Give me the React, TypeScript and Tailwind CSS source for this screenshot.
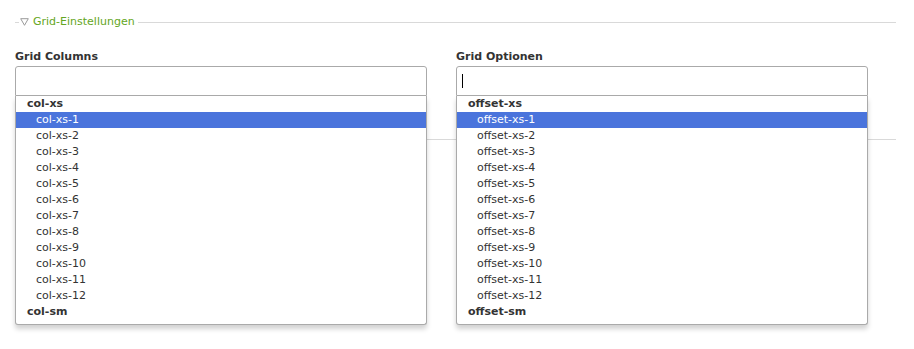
import React from 'react';

interface GridSelectProps {
  label: string;
  prefix: string;
  nextGroup: string;
  focused?: boolean;
}

const sizes = Array.from({ length: 12 }, (_, i) => i + 1);

const GridSelect: React.FC<GridSelectProps> = ({ label, prefix, nextGroup, focused = false }) => {
  return (
    <div className="flex flex-col">
      <label className="text-[11px] font-bold text-[#333] leading-[14px] h-[14px] mb-[2px]">{label}</label>
      <div className="relative">
        <div className="h-[30px] border border-[#aaa] rounded-t-[3px] bg-white flex items-center pl-[5px]">
          {focused && <span className="w-px h-[14px] bg-black" />}
        </div>
        {/* dropdown list lies over the content below */}
        <div className="absolute left-0 right-0 top-[30px] h-[229px] overflow-hidden bg-white border-x border-b border-[#aaa] rounded-b-[3px] shadow-[0_4px_5px_rgba(0,0,0,0.18)] z-10">
          <div className="h-[16px] leading-[16px] pl-[11px] text-[11px] font-bold text-[#333]">{prefix}</div>
          {sizes.map((n) => (
            <div
              key={n}
              className={
                n === 1
                  ? 'h-[16px] leading-[16px] pl-[20px] text-[11px] bg-[#4a74dc] text-white'
                  : 'h-[16px] leading-[16px] pl-[20px] text-[11px] text-[#333]'
              }
            >
              {prefix}-{n}
            </div>
          ))}
          <div className="h-[16px] leading-[16px] pl-[11px] text-[11px] font-bold text-[#333]">{nextGroup}</div>
        </div>
      </div>
    </div>
  );
};

const App: React.FC = () => {
  return (
    <div className="w-[914px] h-[349px] bg-white font-['DejaVu_Sans',sans-serif] pl-[15px] pr-[18px] pt-[16px]">
      <div className="flex items-center h-[12px]">
        <div className="w-[4px] h-px bg-[#d9d9d9]" />
        <svg width="9" height="8" viewBox="0 0 9 8" className="ml-[1px]">
          <polygon points="0.7,0.7 8.3,0.7 4.5,7.3" fill="none" stroke="#9a9a9a" strokeWidth="1" />
        </svg>
        <span className="ml-[4px] text-[11px] leading-[12px] text-[#64a622]">Grid-Einstellungen</span>
        <div className="flex-1 h-px bg-[#d9d9d9] ml-[3px]" />
      </div>
      <div className="grid grid-cols-[412px_412px] gap-x-[29px] mt-[22px]">
        <GridSelect label="Grid Columns" prefix="col-xs" nextGroup="col-sm" />
        <GridSelect label="Grid Optionen" prefix="offset-xs" nextGroup="offset-sm" focused />
      </div>
      <div className="mt-[43px] h-px bg-[#d9d9d9]" />
    </div>
  );
};

export default App;
